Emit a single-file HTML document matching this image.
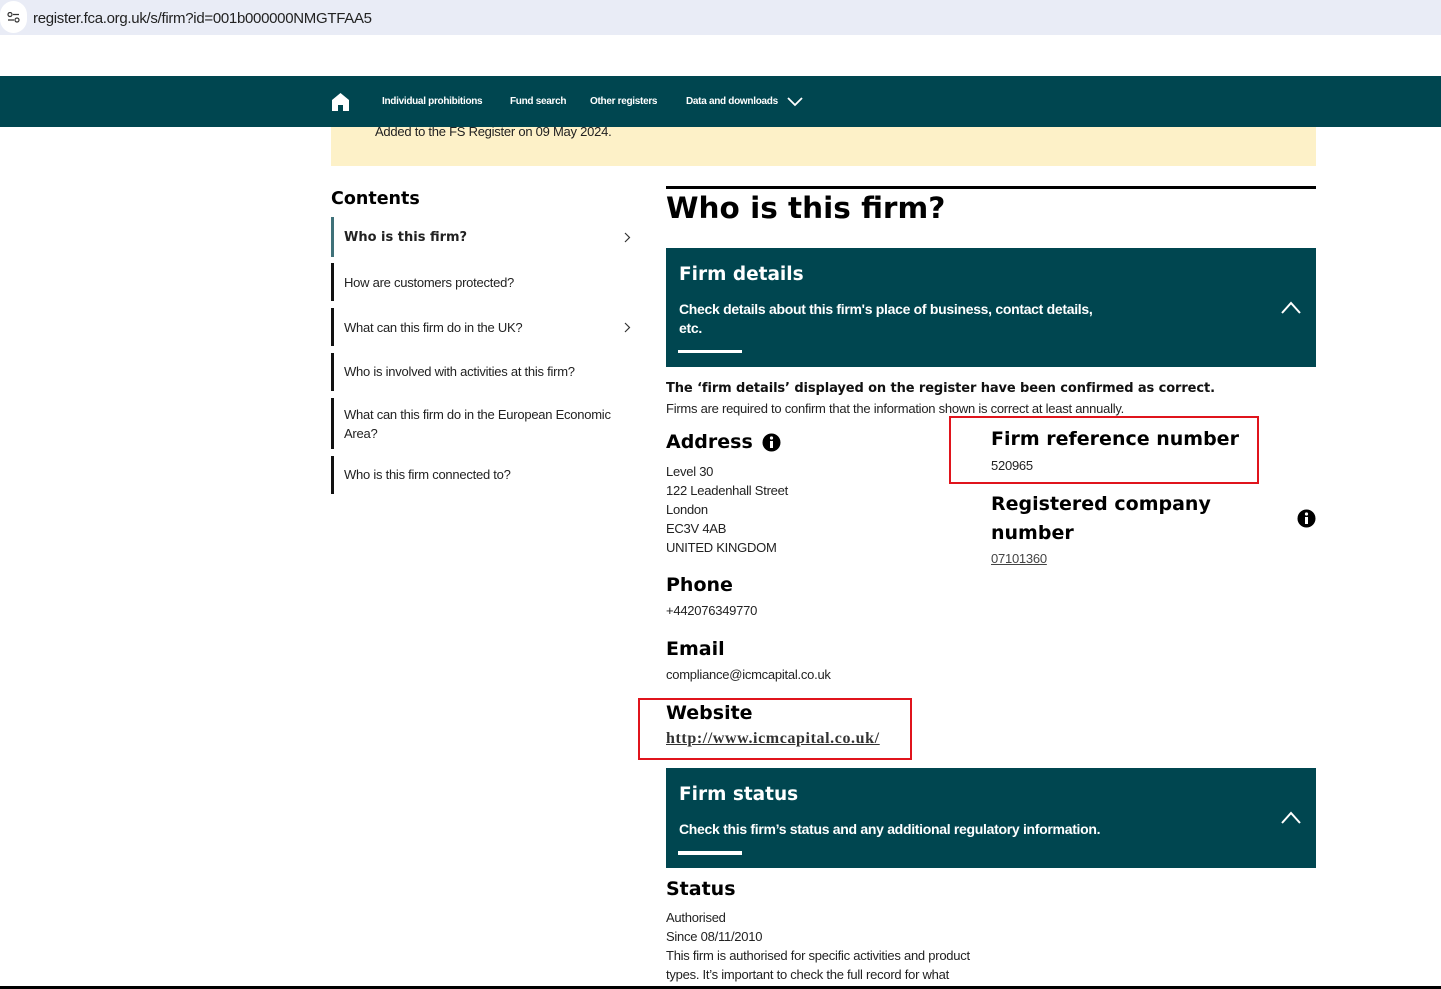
<!DOCTYPE html>
<html><head><meta charset="utf-8"><style>
body{margin:0;width:1441px;height:989px;position:relative;overflow:hidden;background:#fff;font-family:"Liberation Sans",sans-serif;color:#111}
.a{position:absolute;white-space:nowrap}
.t{font-size:13px;letter-spacing:-0.25px;color:#222}
.h{font-family:"DejaVu Sans",sans-serif;font-weight:bold;color:#000}
.teal{background:#004650}
.w{color:#fff}
.bar{position:absolute;left:331px;width:3px;background:#111}
.red{position:absolute;border:2px solid #e0141c}
</style></head><body>
<div class="a" style="left:0;top:0;width:1441px;height:35px;background:#e9ecf6"></div>
<div class="a" style="left:0;top:1px;width:27px;height:32px;border-radius:16px;background:#fff"></div>
<svg class="a" style="left:7px;top:12px" width="13" height="11"><circle cx="3" cy="2.5" r="2" fill="none" stroke="#333" stroke-width="1.2"/><path d="M6 2.5h6M1 8h6" stroke="#333" stroke-width="1.2"/><circle cx="10" cy="8" r="2" fill="none" stroke="#333" stroke-width="1.2"/></svg>
<div class="a" style="left:33px;top:10px;font-size:15px;letter-spacing:-0.3px;color:#222">register.fca.org.uk/s/firm?id=001b000000NMGTFAA5</div>
<div class="a" style="left:331px;top:126px;width:985px;height:40px;background:#fdf1c8"></div>
<div class="a t" style="left:375px;top:124px;color:#222">Added to the FS Register on 09 May 2024.</div>
<div class="a teal" style="left:0;top:76px;width:1441px;height:51px"></div>
<svg class="a" style="left:332px;top:93px" width="17" height="18" viewBox="0 0 17 18"><path d="M8.5 0L0 7v11h6v-6h5v6h6V7z" fill="#fff"/></svg>
<div class="a w" style="left:382px;top:96px;font-size:10px;font-weight:bold;letter-spacing:-0.3px">Individual prohibitions</div>
<div class="a w" style="left:510px;top:96px;font-size:10px;font-weight:bold;letter-spacing:-0.3px">Fund search</div>
<div class="a w" style="left:590px;top:96px;font-size:10px;font-weight:bold;letter-spacing:-0.3px">Other registers</div>
<div class="a w" style="left:686px;top:96px;font-size:10px;font-weight:bold;letter-spacing:-0.3px">Data and downloads</div>
<svg class="a" style="left:787px;top:97px" width="16" height="10"><path d="M1 1l7 7 7-7" stroke="#fff" stroke-width="1.8" fill="none"/></svg>

<div class="a h" style="left:331px;top:189px;font-size:17.5px">Contents</div>
<div class="bar" style="top:217px;height:40px;background:#3f7179"></div>
<div class="a h" style="left:344px;top:230px;font-size:13px;color:#222">Who is this firm?</div>
<svg class="a" style="left:624px;top:232px" width="7" height="11"><path d="M1 1l4.5 4.5L1 10" stroke="#333" stroke-width="1.2" fill="none"/></svg>
<div class="bar" style="top:263px;height:38px"></div>
<div class="a t" style="left:344px;top:275px">How are customers protected?</div>
<div class="bar" style="top:308px;height:38px"></div>
<div class="a t" style="left:344px;top:320px">What can this firm do in the UK?</div>
<svg class="a" style="left:624px;top:322px" width="7" height="11"><path d="M1 1l4.5 4.5L1 10" stroke="#333" stroke-width="1.2" fill="none"/></svg>
<div class="bar" style="top:353px;height:38px"></div>
<div class="a t" style="left:344px;top:364px">Who is involved with activities at this firm?</div>
<div class="bar" style="top:398px;height:51px"></div>
<div class="a t" style="left:344px;top:405px;line-height:19px">What can this firm do in the European Economic<br>Area?</div>
<div class="bar" style="top:456px;height:38px"></div>
<div class="a t" style="left:344px;top:467px">Who is this firm connected to?</div>

<div class="a" style="left:666px;top:186px;width:650px;height:3px;background:#000"></div>
<div class="a h" style="left:666px;top:191px;font-size:29.5px">Who is this firm?</div>
<div class="a teal" style="left:666px;top:248px;width:650px;height:119px"></div>
<div class="a w h" style="left:679px;top:264px;font-size:18.5px;color:#fff">Firm details</div>
<div class="a w" style="left:679px;top:300px;font-size:14px;font-weight:bold;letter-spacing:-0.3px;line-height:19px">Check details about this firm's place of business, contact details,<br>etc.</div>
<div class="a" style="left:678px;top:350px;width:64px;height:3px;background:#fff"></div>
<svg class="a" style="left:1281px;top:301px" width="20" height="13"><path d="M1 12L10 2l9 10" stroke="#fff" stroke-width="2" fill="none"/></svg>
<div class="a" style="left:666px;top:381px;font-weight:bold;font-family:'DejaVu Sans',sans-serif;font-size:13px;letter-spacing:-0.1px">The ‘firm details’ displayed on the register have been confirmed as correct.</div>
<div class="a t" style="left:666px;top:401px">Firms are required to confirm that the information shown is correct at least annually.</div>

<div class="a h" style="left:666px;top:431px;font-size:19px">Address</div>
<svg class="a" style="left:762px;top:433px" width="19" height="19"><circle cx="9.5" cy="9.5" r="9" fill="#000"/><rect x="8" y="8" width="3" height="7" fill="#fff"/><circle cx="9.5" cy="5" r="1.6" fill="#fff"/></svg>
<div class="a t" style="left:666px;top:462px;line-height:19px">Level 30<br>122 Leadenhall Street<br>London<br>EC3V 4AB<br>UNITED KINGDOM</div>
<div class="a h" style="left:666px;top:574px;font-size:19px">Phone</div>
<div class="a t" style="left:666px;top:603px">+442076349770</div>
<div class="a h" style="left:666px;top:638px;font-size:19px">Email</div>
<div class="a t" style="left:666px;top:667px">compliance@icmcapital.co.uk</div>
<div class="a h" style="left:666px;top:702px;font-size:19px">Website</div>
<div class="a" style="left:666px;top:730px;font-family:'Liberation Serif',serif;font-weight:bold;font-size:16px;letter-spacing:0.6px;color:#333;text-decoration:underline">http://www.icmcapital.co.uk/</div>
<div class="red" style="left:638px;top:698px;width:270px;height:58px"></div>

<div class="a h" style="left:991px;top:428px;font-size:19px">Firm reference number</div>
<div class="a t" style="left:991px;top:458px">520965</div>
<div class="red" style="left:949px;top:416px;width:306px;height:64px"></div>
<div class="a h" style="left:991px;top:490px;font-size:19px;line-height:29px">Registered company<br>number</div>
<svg class="a" style="left:1297px;top:509px" width="19" height="19"><circle cx="9.5" cy="9.5" r="9" fill="#000"/><rect x="8" y="8" width="3" height="7" fill="#fff"/><circle cx="9.5" cy="5" r="1.6" fill="#fff"/></svg>
<div class="a t" style="left:991px;top:551px;text-decoration:underline;color:#444">07101360</div>

<div class="a teal" style="left:666px;top:768px;width:650px;height:100px"></div>
<div class="a h" style="left:679px;top:784px;font-size:18.5px;color:#fff">Firm status</div>
<div class="a w" style="left:679px;top:821px;font-size:14px;font-weight:bold;letter-spacing:-0.3px">Check this firm’s status and any additional regulatory information.</div>
<div class="a" style="left:678px;top:851px;width:64px;height:4px;background:#fff"></div>
<svg class="a" style="left:1281px;top:811px" width="20" height="13"><path d="M1 12L10 2l9 10" stroke="#fff" stroke-width="2" fill="none"/></svg>
<div class="a h" style="left:666px;top:878px;font-size:19px">Status</div>
<div class="a t" style="left:666px;top:908px;line-height:19px">Authorised<br>Since 08/11/2010<br>This firm is authorised for specific activities and product<br>types. It’s important to check the full record for what</div>
<div class="a" style="left:0;top:986px;width:1441px;height:3px;background:#000"></div>
</body></html>
